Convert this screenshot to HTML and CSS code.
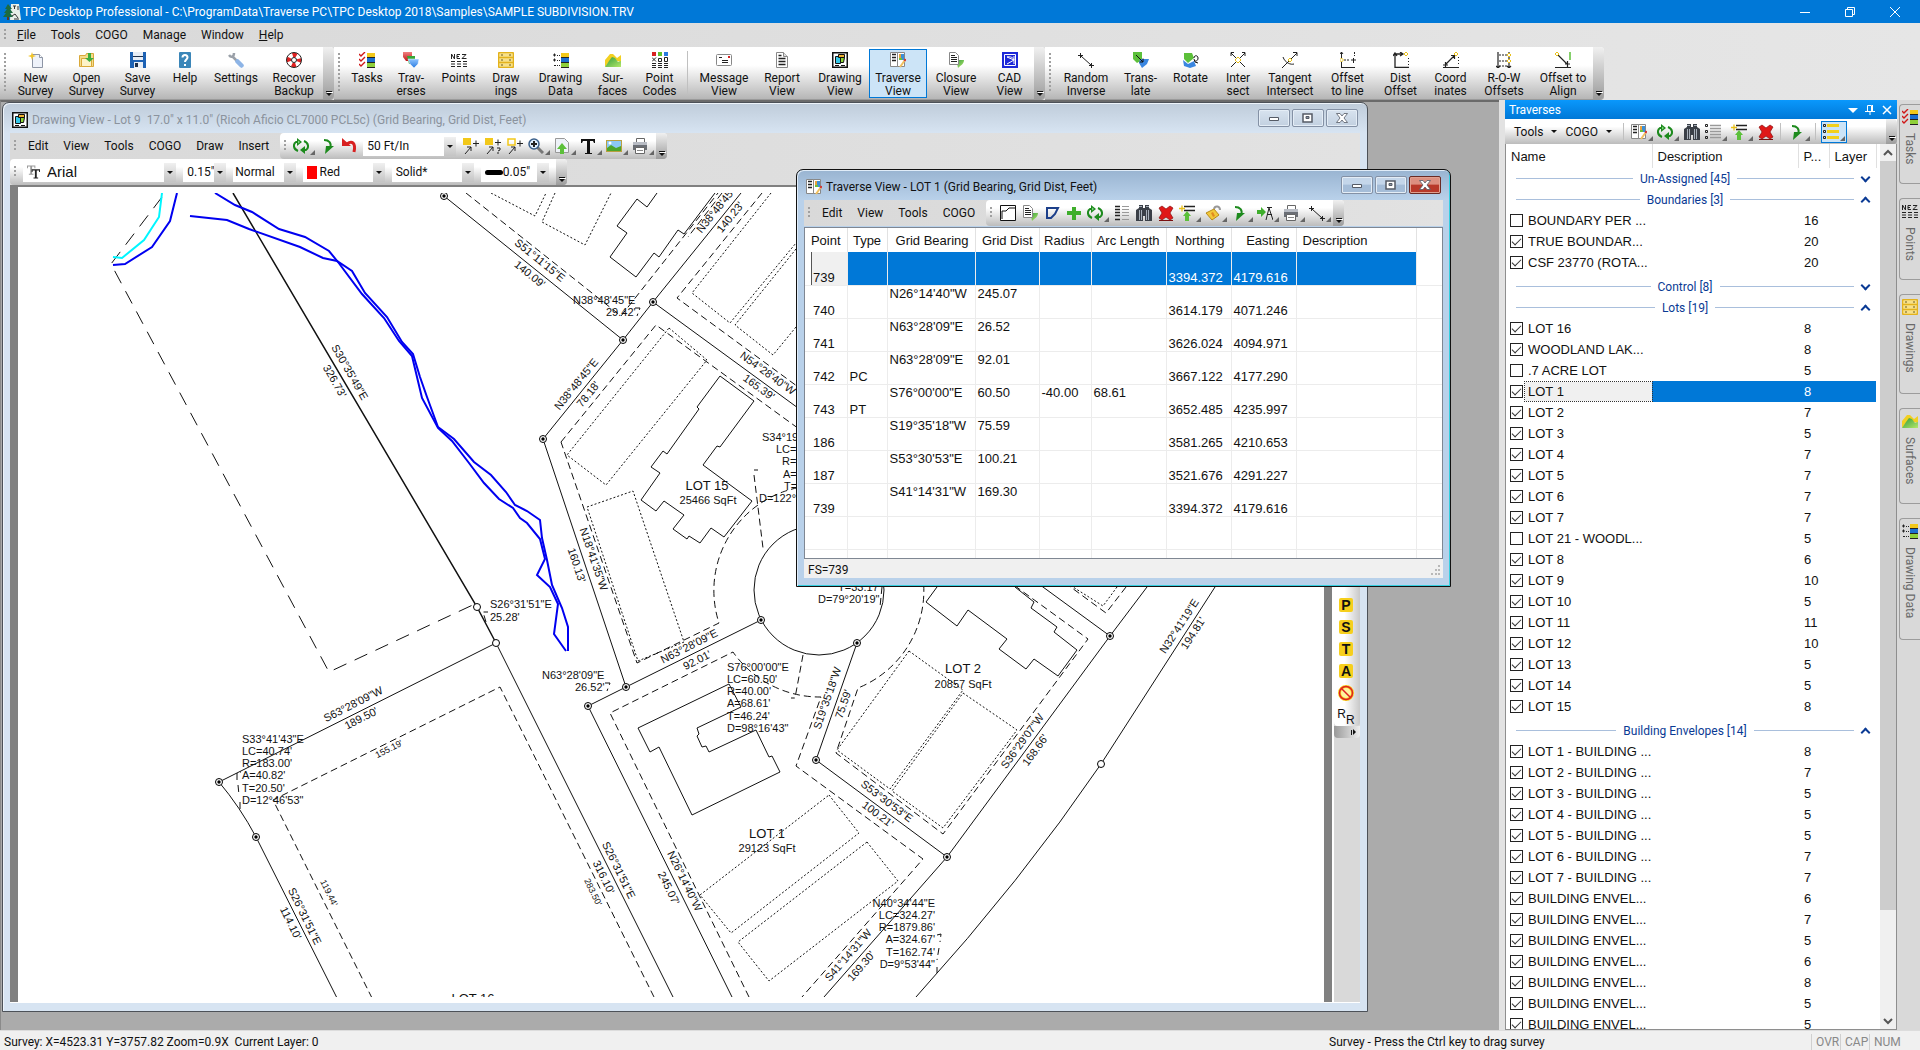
FILE: index.html
```html
<!DOCTYPE html>
<html lang="en">
<head>
<meta charset="utf-8">
<title>TPC Desktop Professional</title>
<link rel="stylesheet" href="styles.css">
</head>
<body>
<svg class="defs" aria-hidden="true">
  <defs>
    <linearGradient id="gGreen" x1="0" y1="0" x2="1" y2="1"><stop offset="0" stop-color="#2f9a3c"/><stop offset="1" stop-color="#b4e86a"/></linearGradient>
    <linearGradient id="gBlue" x1="0" y1="0" x2="0" y2="1"><stop offset="0" stop-color="#8fc4ff"/><stop offset="1" stop-color="#2a7be0"/></linearGradient>
    <linearGradient id="gRed" x1="0" y1="0" x2="0" y2="1"><stop offset="0" stop-color="#f08080"/><stop offset="1" stop-color="#c01818"/></linearGradient>
    <symbol id="i-app" viewBox="0 0 18 18"><path fill="#e8f0e8" d="M8 1h8l2 16H7z"/><path fill="#1c6b3f" d="M5 1l4 5H7l3 4H7l3 4H0l3-4H1l3-4H2z"/><path fill="#5c3b20" d="M4 14h2v3H4z"/><path stroke="#333" fill="none" d="M10 3h3M11.500 3v3M15 3v4M9 13l3-2 3 4M11 16h5"/></symbol>
    <symbol id="i-new" viewBox="0 0 16 16"><path fill="#eef2fa" stroke="#8d95a5" d="M4.500 2.500h7l3 3v10h-10z"/><path fill="#fff" stroke="#8d95a5" d="M11.500 2.500v3h3"/><path fill="#f2c52a" d="M4 0l1 3 3 1-3 1-1 3-1-3-3-1 3-1z"/></symbol>
    <symbol id="i-open" viewBox="0 0 16 16"><path fill="#f4dc8c" stroke="#d9a93a" d="M.500 3.500h6l1-2h7v13h-14z"/><path fill="#fdf3c8" stroke="#d9a93a" d="M2.500 6.500h10v8h-10z"/><path fill="#3fae3f" d="M9 1h3v5h3l-4.500 4L6 6h3z"/></symbol>
    <symbol id="i-save" viewBox="0 0 16 16"><path fill="#1d62b4" d="M0 0h16v16H0z"/><path fill="#e8eef6" d="M3 0h10v8H3zM4 10h9v6H4z"/><path fill="#1d2f4a" d="M3 4h10v1H3zM5 11h3v4H5z"/></symbol>
    <symbol id="i-help" viewBox="0 0 16 16"><rect x="2" y="0" width="12" height="16" rx="1" fill="#3b86b8"/><path fill="none" stroke="#fff" stroke-width="2" d="M5.500 5.500c0-3.500 5-3.500 5 0 0 2-2.500 2-2.500 4.500M8 12v2"/></symbol>
    <symbol id="i-settings" viewBox="0 0 16 16"><path fill="none" stroke="#9aa0a8" stroke-width="2.500" d="M1 3c2 3 5 2 5-2M4.500 4.500L9 9"/><path stroke="#8db4e6" stroke-width="4.500" stroke-linecap="round" d="M9.500 9.500l4 4"/></symbol>
    <symbol id="i-recover" viewBox="0 0 16 16"><circle cx="8" cy="8" r="5" fill="none" stroke="#fff" stroke-width="4.500"/><circle cx="8" cy="8" r="5" fill="none" stroke="#e02020" stroke-width="4.500" stroke-dasharray="4 3.850" stroke-dashoffset="2"/><circle cx="8" cy="8" r="7.500" fill="none" stroke="#222"/><circle cx="8" cy="8" r="2.500" fill="#fff" stroke="#222"/></symbol>
    <symbol id="i-tasks" viewBox="0 0 16 16"><path fill="none" stroke="#d01818" stroke-width="1.400" d="M0 2l2 2 4-4M0 7l2 2 4-4M0 12l2 2 4-4"/><path fill="#f2c81a" d="M8 1h8v4H8z"/><path fill="#1b6fd0" d="M8 6h8v4H8z"/><path fill="#8fd03a" d="M8 11h8v4H8z"/><path stroke="#222" d="M8 5.500h8M8 10.500h8M8 15.500h8"/></symbol>
    <symbol id="i-trav" viewBox="0 0 16 16"><path fill="url(#gRed)" d="M0 0h9v9H3L0 5z"/><path fill="#37a637" d="M4 4h8v8H6z"/><path fill="url(#gBlue)" stroke="#fff" stroke-width=".500" d="M5 7h11l-1 5-4 4-4-4z"/></symbol>
    <symbol id="i-points" viewBox="0 0 16 16"><path fill="none" stroke="#222" d="M.500 7V2l3 5V2M9 2.500H6v4h3M6 4.500h2M11 2.500h4l-4 4h4.500M0 9.500h4M6 9.500h4M12 9.500h4M0 12h4M6 12h4M12 12h4M0 14.500h4M6 14.500h4M12 14.500h4"/></symbol>
    <symbol id="i-draws" viewBox="0 0 16 16"><rect x=".500" y=".500" width="15" height="15" rx="1.500" fill="#f7e08a" stroke="#e3b21c" stroke-width="1.500"/><path stroke="#e3b21c" stroke-width="1.500" d="M1 5.500h14M1 10.500h14"/><path stroke="#6b5c20" d="M3 3h2M11 3h2M3 8h2M11 8h2M3 13h2M11 13h2"/></symbol>
    <symbol id="i-data" viewBox="0 0 16 16"><path stroke="#222" d="M0 3h3M1.500 1.500v3M4 3.500h1M6 3.500h1M0 8h3M1.500 6.500v3M4 8.500h1M6 8.500h1M1 13.500h2M4 13.500h1M6 13.500h1M8 5.500h8M8 10.500h8M8 15.500h8"/><path fill="#f2c81a" d="M8 1h8v4H8z"/><path fill="#1b6fd0" d="M8 6h8v4H8z"/><path fill="#8fd03a" d="M8 11h8v4H8z"/></symbol>
    <symbol id="i-surf" viewBox="0 0 16 16"><path fill="#f2d021" d="M0 8l5-6h3l4 4 4-3v7l-4-1-4-3-4 4-4 5z"/><path fill="url(#gGreen)" d="M0 15l4-6 3-4 3 1 3 4 3-1v6z"/></symbol>
    <symbol id="i-codes" viewBox="0 0 16 16"><path fill="#d82020" d="M0 0h4v4H0z"/><path fill="#5fc12c" d="M6 0h4v4H6z"/><path fill="#2a7be0" d="M12 0h4v4h-4z"/><path fill="none" stroke="#222" d="M0 5.500l4 4M4 5.500l-4 4M6.500 6.500h3v3h-3zM12.500 5.500h3v4h-3zM0 11.500h4M6 11.500h4M12 11.500h4M0 13.500h4M6 13.500h4M12 13.500h4M0 15.500h4M6 15.500h4M12 15.500h4"/></symbol>
    <symbol id="i-msg" viewBox="0 0 16 16"><rect x=".500" y="2.500" width="15" height="11" rx="1" fill="#fff" stroke="#888"/><path stroke="#222" d="M3 5.500h3M6 8.500h6M6 10.500h6"/><path fill="#d82020" d="M12 4h2v2h-2z"/></symbol>
    <symbol id="i-report" viewBox="0 0 16 16"><path fill="#fff" stroke="#888" d="M2.500.500h7l4 4v11h-11z"/><path fill="#ddd" stroke="#888" d="M9.500.500v4h4"/><path stroke="#222" stroke-width="1.300" d="M4.500 3.500h3M4.500 6.500h7M4.500 9.500h7M4.500 12.500h7"/></symbol>
    <symbol id="i-drawv" viewBox="0 0 16 16"><rect x=".750" y=".750" width="14.500" height="14.500" fill="#fff" stroke="#111" stroke-width="1.500"/><path fill="#35c8e8" stroke="#111" d="M3.500 4.500h5v7h-5z"/><path fill="#f0b030" stroke="#111" d="M6.500 2.500h6v3h-6z"/><path fill="#8cd636" stroke="#111" d="M8.500 5.500h4l-1 5h-3z"/><path stroke="#111" d="M3 13.500h4M9 13.500h4"/></symbol>
    <symbol id="i-travv" viewBox="0 0 16 16"><path fill="#fff" stroke="#888" d="M.500.500h7v14h-7zM7.500.500h7v14h-7z"/><path stroke="#222" stroke-width="1.500" d="M2 2.500h4M2 5.500h4M2 8.500h4"/><path fill="#e9a23a" d="M9 2h3v4H9z"/><path fill="#3a8fd8" d="M11 2h3v6h-3z"/><path fill="#6cc03a" d="M9 6h3v2H9z"/><path stroke="#f0c060" stroke-width="2" d="M15 8l-5 7"/><path stroke="#d03030" stroke-width="2" d="M15.500 7l-1 2"/></symbol>
    <symbol id="i-close" viewBox="0 0 16 16"><path fill="url(#gGreen)" d="M6 8h10c0 4-3 5-6 8l-1-5z"/><path fill="#fff" stroke="#888" d="M1.500.500h6l3 3v9h-9z"/><path stroke="#222" d="M3 3.500h4M3 5.500h6M3 7.500h6M3 9.500h6"/></symbol>
    <symbol id="i-cad" viewBox="0 0 16 16"><path fill="#1c28d8" d="M0 0h16v16H0z"/><path fill="none" stroke="#fff" d="M2.500 2.500h11v11h-11zM5 5c3-1 7 1 7 3l-7 4M5 5l7 3M12 4v8"/></symbol>
    <symbol id="i-inv" viewBox="0 0 16 16"><path stroke="#222" fill="none" d="M0 3.500h5M2.500 1v5M3 4l10 9M11 13.500h5M13.500 11v5"/></symbol>
    <symbol id="i-transl" viewBox="0 0 16 16"><path fill="#5cc03a" d="M0 0h9v8l-5 3L0 7z"/><path fill="#3a86e0" d="M7 7h9l-2 5-5 4-3-5z"/><path fill="none" stroke="#111" d="M3 3l7 7M10 6.500v3.500h-3.500"/></symbol>
    <symbol id="i-rot" viewBox="0 0 16 16"><path fill="#5cc03a" d="M1 1h8l2 5-6 5-4-4z"/><path fill="#3a86e0" d="M0 8l5 4 6-3 2 5-6 2-6-2z"/><path fill="none" stroke="#111" d="M11 6c0-3 4-3 4 0s-2 3-3 3M11 7l1 3 3 1"/></symbol>
    <symbol id="i-inter" viewBox="0 0 16 16"><path fill="none" stroke="#222" d="M1 1l14 14M15 1L1 15M1 4V.500h3M12 .500h3V4"/><path fill="#fff" stroke="#e8c01a" d="M8 5l3 3-3 3-3-3z"/></symbol>
    <symbol id="i-tang" viewBox="0 0 16 16"><path fill="none" stroke="#222" d="M0 16L15 1M11 .500h4V4M1 5c2 6 8 8 11 7"/><path fill="#fff" stroke="#e8c01a" d="M8 6l2 2-2 2-2-2z"/></symbol>
    <symbol id="i-offl" viewBox="0 0 16 16"><path fill="none" stroke="#222" d="M1.500 16V0M0 2l1.500-2L3 2M1 15.500h14M11 8h5M13.500 6v5"/><path stroke="#222" stroke-dasharray="2 1" d="M4 8h6M14.500 0v4"/><path fill="#fff" stroke="#e8c01a" d="M1.500 6l2 2-2 2-2-2z"/></symbol>
    <symbol id="i-dist" viewBox="0 0 16 16"><path fill="none" stroke="#222" stroke-width="1.300" d="M2 16V2h7M7 0l3 2-3 2M2 15.500h14M0 4l2-3 2 3"/><path fill="#fff" stroke="#e8c01a" d="M13 0l2 2-2 2-2-2z"/><path stroke="#222" stroke-dasharray="1 2" d="M15.500 6v9"/></symbol>
    <symbol id="i-coord" viewBox="0 0 16 16"><path fill="none" stroke="#222" stroke-width="1.200" d="M0 15.500h16M0 13h5M2.500 10v5M3 12l8-8M8 3.500h3.500V7"/><path fill="#fff" stroke="#e8c01a" d="M13 0l2 2-2 2-2-2z"/><path stroke="#222" stroke-dasharray="1 2" d="M15.500 5v9"/></symbol>
    <symbol id="i-row" viewBox="0 0 16 16"><path fill="none" stroke="#222" stroke-width="1.200" d="M2 0v16M0 14l2 2 2-2M13 0v16M11 14l2 2 2-2"/><path stroke="#222" stroke-dasharray="2 1" d="M3 3h8M3 9h8M3 14h8"/><path fill="#fff" stroke="#e8c01a" d="M13 1l2 2-2 2-2-2zM13 7l2 2-2 2-2-2z"/></symbol>
    <symbol id="i-align" viewBox="0 0 16 16"><path fill="none" stroke="#222" stroke-width="1.200" d="M0 15.500h16M10 12h5M12.500 9v6M3 3l9 9"/><path fill="#fff" stroke="#e8c01a" d="M2 0l2 2-2 2-2-2z"/><path stroke="#5cc03a" stroke-width="1.500" d="M15 0v8"/></symbol>
    <symbol id="i-refresh" viewBox="0 0 16 16"><path fill="none" stroke="#1d8a1d" stroke-width="2" d="M5 13C0 11 0 6 3 4h2M11 3c5 2 5 7 2 9h-2"/><path fill="#1d8a1d" d="M4 0l5 4-5 4zM12 8v8l-5-4z"/><path fill="#7fd87f" d="M5 2.500l2 1.500-2 1.500z"/></symbol>
    <symbol id="i-redo" viewBox="0 0 16 16"><path fill="none" stroke="#1d8a1d" stroke-width="2" d="M4 2c5 0 8 3 6 8"/><path fill="#1d8a1d" d="M14 8l-9 8 1-8z"/></symbol>
    <symbol id="i-undo" viewBox="0 0 16 16"><path fill="none" stroke="#d82020" stroke-width="3" d="M5 6c5-4 9-1 7 8"/><path fill="#d82020" d="M0 8V0l9 8z"/></symbol>
    <symbol id="i-pa" viewBox="0 0 16 16"><path fill="#f2c81a" d="M0 0h8v7H0z"/><path fill="none" stroke="#222" d="M10 5.500h6M13 2.500v6M2 16l6-7M4 9h4v4"/></symbol>
    <symbol id="i-pq" viewBox="0 0 16 16"><path fill="#f2c81a" d="M0 0h8v7H0z"/><path fill="none" stroke="#222" d="M10 4.500h6M13 1.500v6M2 16l6-7M4 9h4v4M12 10h3v2l-2 1M13 14v2"/></symbol>
    <symbol id="i-pb" viewBox="0 0 16 16"><path fill="none" stroke="#f2c81a" stroke-width="1.500" d="M1 1h7v6H1z"/><path fill="none" stroke="#222" d="M10 5.500h6M13 2.500v6M2 16l6-7M4 9h4v4"/></symbol>
    <symbol id="i-zoom" viewBox="0 0 16 16"><path stroke="#777" stroke-width="3" d="M9 9l6 6"/><circle cx="6" cy="6" r="5" fill="#dfefff" stroke="#3a5f8a" stroke-width="1.500"/><path stroke="#222" stroke-width="2" d="M3 6h6M6 3v6"/></symbol>
    <symbol id="i-sheet" viewBox="0 0 16 16"><path fill="#eef2f8" stroke="#999" d="M1.500.500h9l4 4v10h-13z"/><path fill="#5cc03a" d="M8 5l5 6h-3v5H6v-5H3z"/></symbol>
    <symbol id="i-text" viewBox="0 0 16 16"><path fill="#111" d="M1 1h14v4h-1l-1-2h-3v12h2v1H5v-1h2V3H3L2 5H1z"/></symbol>
    <symbol id="i-pic" viewBox="0 0 16 16"><rect x=".500" y="2.500" width="15" height="11" fill="#8cc8f4" stroke="#b8a040"/><path fill="#4ca62c" d="M1 10l4-3 5 3 5-2v5H1z"/><circle cx="4" cy="5" r="1.500" fill="#fff"/></symbol>
    <symbol id="i-print" viewBox="0 0 16 16"><path fill="#fff" stroke="#666" d="M4.500.500h8v4h-8z"/><path fill="#6a6e75" d="M1 4h14v8H1z"/><path fill="#b8bcc4" d="M1 4h14v3H1z"/><path fill="#fff" stroke="#666" d="M3.500 9.500h9v6h-9z"/><path stroke="#888" d="M5 12.500h6"/></symbol>
    <symbol id="i-tt" viewBox="0 0 14 14"><path fill="#999" d="M0 0h9v3H8V1H5.500v8H7v1H2V9h1.500V1H1v2H0z"/><path fill="#222" d="M5 4h9v3h-1V5.500h-2.500V13H12v1H7v-1h1.500V5.500H6V7H5z"/></symbol>
    <symbol id="i-box" viewBox="0 0 16 16"><path fill="#fff" stroke="#111" d="M.500.500h15v15H.500z"/><path fill="none" stroke="#111" d="M2 14V6h4l3-3h6"/></symbol>
    <symbol id="i-poly" viewBox="0 0 16 16"><path fill="none" stroke="#1c3f8a" stroke-width="2" d="M3 3h11l-3 6-4 4H3z"/></symbol>
    <symbol id="i-plus" viewBox="0 0 16 16"><path fill="#3fae2c" d="M6 2h4v4h5v4h-5v5H6v-5H1V6h5z"/></symbol>
    <symbol id="i-rows" viewBox="0 0 16 16"><path stroke="#222" stroke-width="1.500" d="M1 1.500h5M1 4.500h5M1 7.500h5M1 10.500h5M1 14.500h5"/><path stroke="#999" d="M8 1.500h7M8 4.500h7M8 7.500h7M8 10.500h7M8 14.500h7"/></symbol>
    <symbol id="i-bino" viewBox="0 0 16 16"><path fill="#3a3f47" d="M3 0h4v3h2V0h4v3l3 2v11H9v-5H7v5H0V5l3-2z"/><path stroke="#a8b0ba" d="M3.500 5v10M12.500 5v10M5.500 5v10M10.500 5v10M3 1.500h3M10 1.500h3"/></symbol>
    <symbol id="i-del" viewBox="0 0 16 16"><path fill="#e01818" stroke="#8a1010" stroke-width=".700" d="M1 3l3-2 4 3 4-3 3 2-3 5 3 5-3 2-4-3-4 3-3-2 3-5z"/><path stroke="#7a1010" d="M1 15.500h14"/></symbol>
    <symbol id="i-ins" viewBox="0 0 16 16"><path stroke="#222" stroke-width="1.300" d="M5 1.500h11M5 5.500h11"/><path stroke="#e8c01a" stroke-width="1.300" d="M0 3.500h6M3 .500v6"/><path fill="#5cc03a" d="M8 6l4 5h-2v5H6v-5H4z"/></symbol>
    <symbol id="i-lock" viewBox="0 0 16 16"><path fill="none" stroke="#999" stroke-width="2" d="M9 4c1-4 6-3 6 1"/><path fill="#f2c83a" stroke="#b88a18" d="M1 8l8-4 5 6-7 5z"/><path fill="#e08a20" d="M6 8l2 4 2-1-2-4z"/></symbol>
    <symbol id="i-go" viewBox="0 0 16 16"><path fill="#3fae2c" d="M0 5h4V2l5 5-5 5V9H0z"/><path fill="none" stroke="#222" d="M9 15l3-12 4 12M10 2.500h5M10 9.500h5"/></symbol>
    <symbol id="i-list" viewBox="0 0 16 16"><path fill="none" stroke="#222" d="M.500.500h2v2h-2zM.500 6.500h2v2h-2zM.500 12.500h2v2h-2z"/><path stroke="#999" stroke-width="1.500" d="M5 1.500h11M5 4.500h11M5 7.500h11M5 10.500h11M5 13.500h11"/></symbol>
    <symbol id="i-ylist" viewBox="0 0 16 16"><path fill="none" stroke="#222" d="M.500.500h2v2h-2zM.500 6.500h2v2h-2zM.500 12.500h2v2h-2z"/><path stroke="#f2d01a" stroke-width="3" d="M4 1.500h12M4 7.500h12M4 13.500h12"/></symbol>
    <symbol id="i-min" viewBox="0 0 14 10"><path fill="#fff" stroke="#555b66" d="M2.500 4.500h9v3h-9z"/></symbol>
    <symbol id="i-max" viewBox="0 0 14 10"><path fill="#fff" stroke="#555b66" stroke-width="1.500" d="M2 1h9v8H2z"/><path fill="#8a93a2" stroke="#555b66" d="M5 3.500h3v2H5z"/></symbol>
    <symbol id="i-x" viewBox="0 0 14 10"><path fill="#fff" stroke="#555b66" stroke-width=".800" d="M1.500.500h3.500l2 2.500 2-2.500h3.500L9 5l3.500 4.500H9L7 7 5 9.500H1.500L5 5z"/></symbol>
    <symbol id="n-mon" viewBox="-5 -5 10 10" overflow="visible"><circle r="3.500" fill="#fff" stroke="#000"/><circle r="1.700" fill="#000"/></symbol>
    <symbol id="n-open" viewBox="-5 -5 10 10" overflow="visible"><circle r="3.500" fill="#fff" stroke="#000"/></symbol>
  </defs>
</svg>
<div class="app">
  <header class="titlebar">
    <svg class="logo"><use href="#i-app"/></svg>
    <h1>TPC Desktop Professional - C:\ProgramData\Traverse PC\TPC Desktop 2018\Samples\SAMPLE SUBDIVISION.TRV</h1>
    <div class="sys">
      <button aria-label="Minimize"><svg viewBox="0 0 12 12"><path d="M1 6.500h10"/></svg></button>
      <button aria-label="Restore"><svg viewBox="0 0 12 12"><path d="M1.500 3.500h7v7h-7zM3.500 3.500v-2h7v7h-2"/></svg></button>
      <button aria-label="Close"><svg viewBox="0 0 12 12"><path d="M1 1l10 10M11 1L1 11"/></svg></button>
    </div>
  </header>
  <nav class="menubar"><i class="grip"></i>
    <button><u>F</u>ile</button><button>Tools</button><button>COGO</button><button>Manage</button><button>Window</button><button><u>H</u>elp</button>
  </nav>
  <div class="ribbon">
    <div class="rgroup"><i class="grip"></i>
      <button class="w51"><svg><use href="#i-new"/></svg>New<br>Survey</button>
      <button class="w51"><svg><use href="#i-open"/></svg>Open<br>Survey</button>
      <button class="w51"><svg><use href="#i-save"/></svg>Save<br>Survey</button>
      <button class="w44"><svg><use href="#i-help"/></svg>Help</button>
      <button class="w58"><svg><use href="#i-settings"/></svg>Settings</button>
      <button class="w58"><svg><use href="#i-recover"/></svg>Recover<br>Backup</button>
      <i class="more"></i></div>
    <div class="rgroup"><i class="grip"></i>
      <button class="w44"><svg><use href="#i-tasks"/></svg>Tasks</button>
      <button class="w44"><svg><use href="#i-trav"/></svg>Trav-<br>erses</button>
      <button class="w51"><svg><use href="#i-points"/></svg>Points</button>
      <button class="w44"><svg><use href="#i-draws"/></svg>Draw<br>ings</button>
      <button class="w65"><svg><use href="#i-data"/></svg>Drawing<br>Data</button>
      <button class="w39"><svg><use href="#i-surf"/></svg>Sur-<br>faces</button>
      <button class="w55"><svg><use href="#i-codes"/></svg>Point<br>Codes</button>
      <i class="sep"></i>
      <button class="w58"><svg><use href="#i-msg"/></svg>Message<br>View</button>
      <button class="w58"><svg><use href="#i-report"/></svg>Report<br>View</button>
      <button class="w58"><svg><use href="#i-drawv"/></svg>Drawing<br>View</button>
      <button class="w58 on"><svg><use href="#i-travv"/></svg>Traverse<br>View</button>
      <button class="w58"><svg><use href="#i-close"/></svg>Closure<br>View</button>
      <button class="w49"><svg><use href="#i-cad"/></svg>CAD<br>View</button>
      <i class="more"></i></div>
    <div class="rgroup"><i class="grip"></i>
      <button class="w60"><svg><use href="#i-inv"/></svg>Random<br>Inverse</button>
      <button class="w49"><svg><use href="#i-transl"/></svg>Trans-<br>late</button>
      <button class="w51"><svg><use href="#i-rot"/></svg>Rotate</button>
      <button class="w44"><svg><use href="#i-inter"/></svg>Inter<br>sect</button>
      <button class="w60"><svg><use href="#i-tang"/></svg>Tangent<br>Intersect</button>
      <button class="w55"><svg><use href="#i-offl"/></svg>Offset<br>to line</button>
      <button class="w51"><svg><use href="#i-dist"/></svg>Dist<br>Offset</button>
      <button class="w49"><svg><use href="#i-coord"/></svg>Coord<br>inates</button>
      <button class="w58"><svg><use href="#i-row"/></svg>R-O-W<br>Offsets</button>
      <button class="w60"><svg><use href="#i-align"/></svg>Offset to<br>Align</button>
      <i class="more"></i></div>
  </div>

  <main class="work">
    <section class="mdi">
      <article class="win drawing">
        <header class="wtitle"><svg><use href="#i-drawv"/></svg><h2>Drawing View - Lot 9&nbsp; 17.0" x 11.0" (Ricoh Aficio CL7000 PCL5c) (Grid Bearing, Grid Dist, Feet)</h2>
          <button aria-label="Minimize"><svg><use href="#i-min"/></svg></button><button aria-label="Maximize"><svg><use href="#i-max"/></svg></button><button aria-label="Close"><svg><use href="#i-x"/></svg></button></header>
        <div class="bars">
          <nav class="wmenu"><i class="grip"></i><button>Edit</button><button>View</button><button>Tools</button><button>COGO</button><button>Draw</button><button>Insert</button></nav>
          <div class="strip"><i class="grip"></i>
            <button class="ib d" aria-label="Refresh"><svg><use href="#i-refresh"/></svg></button>
            <button class="ib" aria-label="Redraw"><svg><use href="#i-redo"/></svg></button>
            <button class="ib" aria-label="Undo"><svg><use href="#i-undo"/></svg></button>
            <label class="combo scale"><select aria-label="Scale"><option>50 Ft/In</option></select><i class="arr"></i></label>
            <button class="ib" aria-label="Add label"><svg><use href="#i-pa"/></svg></button>
            <button class="ib" aria-label="Query label"><svg><use href="#i-pq"/></svg></button>
            <button class="ib" aria-label="Add box"><svg><use href="#i-pb"/></svg></button>
            <button class="ib d" aria-label="Zoom"><svg><use href="#i-zoom"/></svg></button>
            <button class="ib d" aria-label="Sheet"><svg><use href="#i-sheet"/></svg></button>
            <button class="ib d" aria-label="Text"><svg><use href="#i-text"/></svg></button>
            <button class="ib d" aria-label="Picture"><svg><use href="#i-pic"/></svg></button>
            <button class="ib d" aria-label="Print"><svg><use href="#i-print"/></svg></button>
            <i class="more"></i></div>
        </div>
        <div class="bars">
          <div class="strip format"><i class="grip"></i>
            <label class="combo font"><svg><use href="#i-tt"/></svg><select aria-label="Font"><option>Arial</option></select><i class="arr"></i></label>
            <label class="combo size"><select aria-label="Text height"><option>0.15"</option></select><i class="arr"></i></label>
            <label class="combo weight"><select aria-label="Style"><option>Normal</option></select><i class="arr"></i></label>
            <label class="combo pen"><i class="swatch"></i><select aria-label="Color"><option>Red</option></select><i class="arr"></i></label>
            <label class="combo pen"><select aria-label="Line type"><option>Solid*</option></select><i class="arr"></i></label>
            <label class="combo thick"><i class="stroke"></i><select aria-label="Line width"><option>0.05"</option></select><i class="arr"></i></label>
            <i class="more"></i></div>
        </div>
        <div class="sheet">
          <div class="canvas">
            <svg class="map" width="1306" height="815" viewBox="18 187 1306 815">
              <clipPath id="page"><rect x="18" y="193" width="1306" height="804"/></clipPath>
              <g clip-path="url(#page)">
                <g class="ln">
                  <path d="M233 193L477 607L496 643" stroke-width="1.500"/>
                  <path d="M673 997L496 643L219 782Q240 807 256 837L337 998"/>
                  <path d="M732 997L588 706L626 687L761 620M626 687L543 439L623 340L653 302L741 193M444 196L623 340M653 302L1110 636L947 857L824 997M1147 587L1110 636M857 643L816 760L947 857"/>
                  <circle cx="819" cy="590" r="65"/>
                  <path d="M1215 587L1101 764Q1022 880 916 997"/>
                  <path d="M657 193L647 207L637 199L617 226L627 233L610 257L636 277L654 253L659 257L678 230L684 234L715 193"/>
                  <path d="M720 376L754 401L720 447L717 446L703 465L752 501L724 537L711 528L700 543L689 536L687 539L673 529L684 515L664 501L656 511L641 500L660 473L651 467L663 451L667 454L699 409L697 407z"/>
                  <path d="M729 684L638 728L650 752L659 747L692 815L780 772L772 756L769 757L756 730L709 752L706 746L702 747L697 736L699 734L697 728L741 707z"/>
                  <path d="M937 587L926 602L957 626L968 610L1007 639L999 649L1026 669L1034 659L1058 676L1077 650L1054 632L1057 627L1031 608L1034 602L1015 587"/>
                </g>
                <g class="ln long"><path d="M162 197L111 264L329 672L477 603"/></g>
                <g class="ln dash">
                  <path d="M372 998L273 800L500 687L654 997"/>
                  <path d="M466 193L621 316L718 193M762 193L677 298L1106 613L1126 587M722 193L688 237"/>
                  <path d="M561 442L656 325L1088 639L943 834L836 753L858 688A105 105 0 1 0 719 623L637 663z"/>
                  <path d="M749 997L610 713L733 652A106 106 0 0 0 821 697L796 766L923 859L802 997"/>
                  <path d="M803 655L795 698H791M754 475L763 548M754 470h4M486 622L483 612H488M237 780V772H241M238 785L239 795M240 802V809M937 935L941 934L940 942M939 948L937 960M937 967V973M882 587L880 607"/>
                  <path d="M605 683H610L607 691M635 308H640L637 316"/>
                </g>
                <g class="ln dot">
                  <path d="M491 193L535 216L546 193M555 193L542 222L585 245L611 193"/>
                  <path d="M771 193L692 293L730 323L796 243M796 249L735 325L773 355L796 327"/>
                  <path d="M669 328L707 360L606 485L567 455zM587 507L633 491L684 642L638 661z"/>
                  <path d="M829 795L859 833L731 933L700 895zM867 842L898 881L769 981L738 942z"/>
                  <path d="M909 651L963 690L890 789L837 750zM963 693L1017 730L943 828L892 791zM1117 587L1103 606L1073 587"/>
                </g>
                <g class="river">
                  <path class="cyan" d="M162 193L159 217L144 240L122 258L113 257"/>
                  <path d="M177 193L170 221L152 247L125 264L113 265"/>
                  <path d="M190 216L227 220L249 229L300 247L323 258L337 261L352 271L365 293L387 317L402 342L413 354L420 377L427 397L438 427L454 439L474 462L491 475L506 492L515 505L527 511L540 520L542 538L547 560L549 570L552 585L562 608L568 627V651"/>
                  <path d="M215 193L235 205L252 212L279 229L305 237L329 251L338 262L362 294L384 318L399 341L412 356L417 377L422 398L438 428L452 441L469 463L484 483L499 499L513 508L520 518L527 523L540 539L545 559L537 575L550 587L558 604L554 634L566 651"/>
                </g>
                <g class="nodes">
                  <use href="#n-mon" x="439" y="191" width="10" height="10"/><use href="#n-mon" x="648" y="297" width="10" height="10"/><use href="#n-mon" x="618" y="335" width="10" height="10"/><use href="#n-mon" x="538" y="434" width="10" height="10"/><use href="#n-mon" x="583" y="701" width="10" height="10"/><use href="#n-mon" x="621" y="682" width="10" height="10"/><use href="#n-mon" x="756" y="615" width="10" height="10"/><use href="#n-mon" x="852" y="638" width="10" height="10"/><use href="#n-mon" x="811" y="755" width="10" height="10"/><use href="#n-mon" x="942" y="852" width="10" height="10"/><use href="#n-mon" x="1105" y="631" width="10" height="10"/><use href="#n-mon" x="214" y="777" width="10" height="10"/><use href="#n-mon" x="251" y="832" width="10" height="10"/>
                  <use href="#n-open" x="472" y="602" width="10" height="10"/><use href="#n-open" x="491" y="638" width="10" height="10"/><use href="#n-open" x="1096" y="759" width="10" height="10"/>
                </g>
                <g class="t">
                  <text x="573" y="304">N38°48'45"E</text><text x="606" y="316">29.42'</text>
                  <text x="490" y="608">S26°31'51"E</text><text x="490" y="621">25.28'</text>
                  <text x="542" y="679">N63°28'09"E</text><text x="575" y="691">26.52'</text>
                  <text x="242" y="743">S33°41'43"E</text><text x="242" y="755">LC=40.74'</text><text x="242" y="767">R=183.00'</text><text x="242" y="779">A=40.82'</text><text x="242" y="792">T=20.50'</text><text x="242" y="804">D=12°46'53"</text>
                  <text x="727" y="671">S76°00'00"E</text><text x="727" y="683">LC=60.50'</text><text x="727" y="695">R=40.00'</text><text x="727" y="707">A=68.61'</text><text x="727" y="720">T=46.24'</text><text x="727" y="732">D=98°16'43"</text>
                  <text x="762" y="441">S34°19</text><text x="776" y="453">LC=</text><text x="782" y="465">R=</text><text x="783" y="478">A=</text><text x="784" y="490">T=</text><text x="759" y="502">D=122°</text>
                  <text x="818" y="603">D=79°20'19"</text><text x="838" y="591">T=33.17</text>
                </g>
                <g class="t end">
                  <text x="935" y="907">N40°34'44"E</text><text x="935" y="919">LC=324.27'</text><text x="935" y="931">R=1879.86'</text><text x="935" y="943">A=324.67'</text><text x="935" y="956">T=162.74'</text><text x="935" y="968">D=9°53'44"</text>
                </g>
                <g class="t mid">
                  <text dy="4" transform="translate(540 260) rotate(39)">S51°11'15"E</text><text dy="4" transform="translate(530 274) rotate(39)">140.09'</text>
                  <text dy="4" transform="translate(576 384) rotate(-51)">N38°48'45"E</text><text dy="4" transform="translate(588 394) rotate(-51)">78.18'</text>
                  <text dy="4" transform="translate(718 207) rotate(-51)">N38°48'45"E</text><text dy="4" transform="translate(730 217) rotate(-51)">140.23'</text>
                  <text dy="4" transform="translate(768 373) rotate(36)">N54°28'40"W</text><text dy="4" transform="translate(759 387) rotate(36)">165.39'</text>
                  <text dy="4" transform="translate(594 559) rotate(71)">N18°41'35"W</text><text dy="4" transform="translate(577 565) rotate(71)">160.13'</text>
                  <text dy="4" transform="translate(350 372) rotate(60)">S30°35'49"E</text><text dy="4" transform="translate(335 381) rotate(60)">326.73'</text>
                  <text dy="4" transform="translate(353 704) rotate(-27)">S63°28'09"W</text><text dy="4" transform="translate(361 718) rotate(-27)">189.50'</text>
                  <text dy="4" transform="translate(305 916) rotate(64)">S26°31'51"E</text><text dy="4" transform="translate(291 923) rotate(64)">114.10'</text>
                  <text dy="4" transform="translate(619 870) rotate(64)">S26°31'51"E</text><text dy="4" transform="translate(604 877) rotate(64)">316.10'</text>
                  <text dy="4" transform="translate(685 881) rotate(64)">N26°14'40"W</text><text dy="4" transform="translate(669 888) rotate(64)">245.07'</text>
                  <text dy="4" transform="translate(689 646) rotate(-27)">N63°28'09"E</text><text dy="4" transform="translate(697 660) rotate(-27)">92.01'</text>
                  <text dy="4" transform="translate(827 698) rotate(-71)">S19°35'18"W</text><text dy="4" transform="translate(843 704) rotate(-71)">75.59'</text>
                  <text dy="4" transform="translate(887 801) rotate(37)">S53°30'53"E</text><text dy="4" transform="translate(878 814) rotate(37)">100.21'</text>
                  <text dy="4" transform="translate(1022 741) rotate(-54)">S36°29'07"W</text><text dy="4" transform="translate(1035 750) rotate(-54)">168.66'</text>
                  <text dy="4" transform="translate(1179 626) rotate(-57)">N32°41'19"E</text><text dy="4" transform="translate(1193 633) rotate(-57)">194.81'</text>
                  <text dy="4" transform="translate(848 955) rotate(-49)">S41°14'31"W</text><text dy="4" transform="translate(861 966) rotate(-49)">169.30'</text>
                  <text x="708" y="504">25466 SqFt</text><text x="767" y="852">29123 SqFt</text><text x="963" y="688">20857 SqFt</text>
                </g>
                <g class="t mid small">
                  <text dy="3" transform="translate(389 749) rotate(-27)">155.19'</text><text dy="3" transform="translate(329 893) rotate(64)">119.44'</text><text dy="3" transform="translate(593 892) rotate(64)">283.50'</text>
                </g>
                <g class="t mid lot"><text x="707" y="490">LOT 15</text><text x="767" y="838">LOT 1</text><text x="963" y="673">LOT 2</text><text x="473" y="1003">LOT 16</text></g>
              </g>
            </svg>
          </div>
          <div class="side"><div class="sidebar">
            <button class="key">P</button><button class="key">S</button><button class="key">T</button><button class="key">A</button>
            <button class="glyph" aria-label="None"><svg viewBox="0 0 16 16"><circle cx="8" cy="8" r="6.500" fill="#fff4a0" stroke="#f6cf1c" stroke-width="3"/><circle cx="8" cy="8" r="6.500" fill="none" stroke="#e02020" stroke-width="1.500"/><path stroke="#e02020" stroke-width="1.500" d="M3.500 3.500l9 9"/></svg></button>
            <button class="glyph rr"><span>R</span><sub>R</sub></button></div>
            <i class="cap"></i></div>
        </div>
      </article>

      <article class="win traverse">
        <header class="wtitle"><svg><use href="#i-travv"/></svg><h2>Traverse View - LOT 1 (Grid Bearing, Grid Dist, Feet)</h2>
          <button aria-label="Minimize"><svg><use href="#i-min"/></svg></button><button aria-label="Maximize"><svg><use href="#i-max"/></svg></button><button class="kill" aria-label="Close"><svg><use href="#i-x"/></svg></button></header>
        <div class="bars">
          <nav class="wmenu"><i class="grip"></i><button>Edit</button><button>View</button><button>Tools</button><button>COGO</button></nav>
          <div class="strip"><i class="grip"></i>
            <button class="ib" aria-label="Plot"><svg><use href="#i-box"/></svg></button>
            <button class="ib" aria-label="Closure"><svg><use href="#i-close"/></svg></button>
            <button class="ib" aria-label="Area"><svg><use href="#i-poly"/></svg></button>
            <button class="ib" aria-label="Add"><svg><use href="#i-plus"/></svg></button>
            <button class="ib d" aria-label="Refresh"><svg><use href="#i-refresh"/></svg></button>
            <button class="ib" aria-label="Rows"><svg><use href="#i-rows"/></svg></button>
            <button class="ib" aria-label="Find"><svg><use href="#i-bino"/></svg></button>
            <button class="ib" aria-label="Delete"><svg><use href="#i-del"/></svg></button>
            <button class="ib d" aria-label="Insert"><svg><use href="#i-ins"/></svg></button>
            <button class="ib d" aria-label="Lock"><svg><use href="#i-lock"/></svg></button>
            <button class="ib d" aria-label="Redo"><svg><use href="#i-redo"/></svg></button>
            <button class="ib d" aria-label="Go to"><svg><use href="#i-go"/></svg></button>
            <button class="ib d" aria-label="Print"><svg><use href="#i-print"/></svg></button>
            <button class="ib d" aria-label="Inverse"><svg><use href="#i-inv"/></svg></button>
            <i class="more"></i></div>
        </div>
        <div class="gridbox">
          <table class="pts">
            <colgroup><col class="c42"><col class="c40"><col class="c88"><col class="c64"><col class="c52"><col class="c75"><col class="c65"><col class="c65"><col class="c120"><col></colgroup>
            <thead><tr><th class="c">Point</th><th class="c">Type</th><th>Grid Bearing</th><th>Grid Dist</th><th>Radius</th><th>Arc Length</th><th>Northing</th><th>Easting</th><th class="l">Description</th><th></th></tr></thead>
            <tbody>
              <tr class="sel"><td class="p">739</td><td></td><td></td><td></td><td></td><td></td><td>3394.372</td><td>4179.616</td><td></td><td></td></tr>
              <tr><td class="p">740</td><td></td><td class="a">N26°14'40"W</td><td class="a">245.07</td><td></td><td></td><td>3614.179</td><td>4071.246</td><td></td><td></td></tr>
              <tr><td class="p">741</td><td></td><td class="a">N63°28'09"E</td><td class="a">26.52</td><td></td><td></td><td>3626.024</td><td>4094.971</td><td></td><td></td></tr>
              <tr><td class="p">742</td><td>PC</td><td class="a">N63°28'09"E</td><td class="a">92.01</td><td></td><td></td><td>3667.122</td><td>4177.290</td><td></td><td></td></tr>
              <tr><td class="p">743</td><td>PT</td><td class="a">S76°00'00"E</td><td class="a">60.50</td><td class="a">-40.00</td><td class="a">68.61</td><td>3652.485</td><td>4235.997</td><td></td><td></td></tr>
              <tr><td class="p">186</td><td></td><td class="a">S19°35'18"W</td><td class="a">75.59</td><td></td><td></td><td>3581.265</td><td>4210.653</td><td></td><td></td></tr>
              <tr><td class="p">187</td><td></td><td class="a">S53°30'53"E</td><td class="a">100.21</td><td></td><td></td><td>3521.676</td><td>4291.227</td><td></td><td></td></tr>
              <tr><td class="p">739</td><td></td><td class="a">S41°14'31"W</td><td class="a">169.30</td><td></td><td></td><td>3394.372</td><td>4179.616</td><td></td><td></td></tr>
              <tr><td></td><td></td><td></td><td></td><td></td><td></td><td></td><td></td><td></td><td></td></tr>
              <tr><td></td><td></td><td></td><td></td><td></td><td></td><td></td><td></td><td></td><td></td></tr>
            </tbody>
          </table>
        </div>
        <footer class="wstatus"><span>FS=739</span><svg viewBox="0 0 10 10"><path fill="#b8b8b8" d="M7 0h2v2H7zM4 4h2v2H4zM7 4h2v2H7zM0 8h2v2H0zM4 8h2v2H4zM7 8h2v2H7z"/></svg></footer>
      </article>
    </section>

    <aside class="panel">
      <header class="ptitle"><h2>Traverses</h2>
        <button aria-label="Menu"><svg viewBox="0 0 10 10"><path fill="#fff" d="M0 3h10L5 8z"/></svg></button>
        <button aria-label="Pin"><svg viewBox="0 0 10 10"><path fill="none" stroke="#fff" d="M2.500 6V.500h4V6M7.500 0v6M0 6.500h10M5 7v3"/></svg></button>
        <button aria-label="Close"><svg viewBox="0 0 10 10"><path fill="none" stroke="#fff" stroke-width="1.500" d="M1 1l8 8M9 1L1 9"/></svg></button></header>
      <div class="strip pbar">
        <button class="pm">Tools</button><button class="pm">COGO</button><i class="sep"></i>
        <button class="ib d" aria-label="Traverse view"><svg><use href="#i-travv"/></svg></button>
        <button class="ib d" aria-label="Refresh"><svg><use href="#i-refresh"/></svg></button>
        <button class="ib" aria-label="Find"><svg><use href="#i-bino"/></svg></button>
        <button class="ib d" aria-label="List"><svg><use href="#i-list"/></svg></button>
        <button class="ib d" aria-label="Insert"><svg><use href="#i-ins"/></svg></button>
        <button class="ib" aria-label="Delete"><svg><use href="#i-del"/></svg></button><i class="sep"></i>
        <button class="ib d" aria-label="Redo"><svg><use href="#i-redo"/></svg></button><i class="sep"></i>
        <button class="ib d on" aria-label="Groups"><svg><use href="#i-ylist"/></svg></button>
        <i class="more"></i></div>
      <div class="plist">
        <table class="names">
          <colgroup><col class="n1"><col class="n1"><col class="n3"><col class="n4"><col></colgroup>
          <thead><tr><th>Name</th><th>Description</th><th>P...</th><th>Layer</th><th></th></tr></thead>
          <tbody>
            <tr class="g shut"><td colspan="5"><div><span>Un-Assigned [45]</span></div></td></tr>
            <tr class="g"><td colspan="5"><div><span>Boundaries [3]</span></div></td></tr>
            <tr><td><label><input type="checkbox">BOUNDARY PER ...</label></td><td></td><td>16</td><td></td></tr>
            <tr><td><label><input type="checkbox" checked>TRUE BOUNDAR...</label></td><td></td><td>20</td><td></td></tr>
            <tr><td><label><input type="checkbox" checked>CSF 23770 (ROTA...</label></td><td></td><td>20</td><td></td></tr>
            <tr class="g gap shut"><td colspan="5"><div><span>Control [8]</span></div></td></tr>
            <tr class="g"><td colspan="5"><div><span>Lots [19]</span></div></td></tr>
            <tr><td><label><input type="checkbox" checked>LOT 16</label></td><td></td><td>8</td><td></td></tr>
            <tr><td><label><input type="checkbox" checked>WOODLAND LAK...</label></td><td></td><td>8</td><td></td></tr>
            <tr><td><label><input type="checkbox">.7 ACRE LOT</label></td><td></td><td>5</td><td></td></tr>
            <tr class="sel"><td><label><input type="checkbox" checked><span>LOT 1</span></label></td><td></td><td>8</td><td></td></tr>
            <tr><td><label><input type="checkbox" checked>LOT 2</label></td><td></td><td>7</td><td></td></tr>
            <tr><td><label><input type="checkbox" checked>LOT 3</label></td><td></td><td>5</td><td></td></tr>
            <tr><td><label><input type="checkbox" checked>LOT 4</label></td><td></td><td>7</td><td></td></tr>
            <tr><td><label><input type="checkbox" checked>LOT 5</label></td><td></td><td>7</td><td></td></tr>
            <tr><td><label><input type="checkbox" checked>LOT 6</label></td><td></td><td>7</td><td></td></tr>
            <tr><td><label><input type="checkbox" checked>LOT 7</label></td><td></td><td>7</td><td></td></tr>
            <tr><td><label><input type="checkbox">LOT 21 - WOODL...</label></td><td></td><td>5</td><td></td></tr>
            <tr><td><label><input type="checkbox" checked>LOT 8</label></td><td></td><td>6</td><td></td></tr>
            <tr><td><label><input type="checkbox" checked>LOT 9</label></td><td></td><td>10</td><td></td></tr>
            <tr><td><label><input type="checkbox" checked>LOT 10</label></td><td></td><td>5</td><td></td></tr>
            <tr><td><label><input type="checkbox" checked>LOT 11</label></td><td></td><td>11</td><td></td></tr>
            <tr><td><label><input type="checkbox" checked>LOT 12</label></td><td></td><td>10</td><td></td></tr>
            <tr><td><label><input type="checkbox" checked>LOT 13</label></td><td></td><td>5</td><td></td></tr>
            <tr><td><label><input type="checkbox" checked>LOT 14</label></td><td></td><td>5</td><td></td></tr>
            <tr><td><label><input type="checkbox" checked>LOT 15</label></td><td></td><td>8</td><td></td></tr>
            <tr class="g gap"><td colspan="5"><div><span>Building Envelopes [14]</span></div></td></tr>
            <tr><td><label><input type="checkbox" checked>LOT 1 - BUILDING ...</label></td><td></td><td>8</td><td></td></tr>
            <tr><td><label><input type="checkbox" checked>LOT 2 - BUILDING ...</label></td><td></td><td>7</td><td></td></tr>
            <tr><td><label><input type="checkbox" checked>LOT 3 - BUILDING ...</label></td><td></td><td>5</td><td></td></tr>
            <tr><td><label><input type="checkbox" checked>LOT 4 - BUILDING ...</label></td><td></td><td>5</td><td></td></tr>
            <tr><td><label><input type="checkbox" checked>LOT 5 - BUILDING ...</label></td><td></td><td>5</td><td></td></tr>
            <tr><td><label><input type="checkbox" checked>LOT 6 - BUILDING ...</label></td><td></td><td>7</td><td></td></tr>
            <tr><td><label><input type="checkbox" checked>LOT 7 - BUILDING ...</label></td><td></td><td>7</td><td></td></tr>
            <tr><td><label><input type="checkbox" checked>BUILDING ENVEL...</label></td><td></td><td>6</td><td></td></tr>
            <tr><td><label><input type="checkbox" checked>BUILDING ENVEL...</label></td><td></td><td>7</td><td></td></tr>
            <tr><td><label><input type="checkbox" checked>BUILDING ENVEL...</label></td><td></td><td>5</td><td></td></tr>
            <tr><td><label><input type="checkbox" checked>BUILDING ENVEL...</label></td><td></td><td>6</td><td></td></tr>
            <tr><td><label><input type="checkbox" checked>BUILDING ENVEL...</label></td><td></td><td>8</td><td></td></tr>
            <tr><td><label><input type="checkbox" checked>BUILDING ENVEL...</label></td><td></td><td>5</td><td></td></tr>
            <tr><td><label><input type="checkbox" checked>BUILDING ENVEL...</label></td><td></td><td>5</td><td></td></tr>
          </tbody>
        </table>
        <div class="scroll"><button aria-label="Scroll up"><svg viewBox="0 0 10 10"><path d="M1 7l4-4 4 4"/></svg></button><div class="track"><i></i></div><button aria-label="Scroll down"><svg viewBox="0 0 10 10"><path d="M1 3l4 4 4-4"/></svg></button></div>
      </div>
    </aside>
    <nav class="tabs">
      <button class="h80"><svg><use href="#i-tasks"/></svg>Tasks</button>
      <button class="h82"><svg><use href="#i-points"/></svg>Points</button>
      <button class="h100"><svg><use href="#i-draws"/></svg>Drawings</button>
      <button class="h96"><svg><use href="#i-surf"/></svg>Surfaces</button>
      <button class="h122"><svg><use href="#i-data"/></svg>Drawing Data</button>
    </nav>
  </main>
  <footer class="status"><span>Survey: X=4523.31 Y=3757.82 Zoom=0.9X&nbsp; Current Layer: 0</span><span class="hint">Survey - Press the Ctrl key to drag survey</span><span class="k">OVR</span><span class="k">CAP</span><span class="k">NUM</span></footer>
</div>
</body>
</html>
```
FILE: styles.css
```css
* { box-sizing: border-box; }
html, body { margin: 0; height: 100%; }
body { font: 12px/16px Roboto, "Open Sans", sans-serif; color: #111; }
button { margin: 0; padding: 0; border: 0; background: none; font: inherit; color: inherit; white-space: nowrap; }
select { appearance: none; border: 0; background: none; font: inherit; color: inherit; padding: 0; min-width: 0; flex: 1; }
h1, h2 { margin: 0; font: inherit; white-space: nowrap; }
i { font-style: normal; }
svg { display: block; flex: none; width: 16px; height: 16px; }
.defs { position: absolute; width: 0; height: 0; }

.app { display: flex; flex-direction: column; height: 100vh; overflow: hidden; background: linear-gradient(90deg, #d9d9d9, #e6e6e6); }
.titlebar { display: flex; align-items: center; gap: 2px; height: 23px; flex: none; padding-left: 3px; background: #0078d7; color: #fff; }
.logo { width: 18px; height: 18px; }
.titlebar h1 { flex: 1; }
.sys { display: flex; gap: 33px; padding-right: 19px; }
.sys svg { width: 12px; height: 12px; fill: none; stroke: #fff; }
.menubar { display: flex; align-items: center; gap: 15px; height: 24px; flex: none; padding-left: 4px; }
.grip { flex: none; width: 2px; height: 12px; background: repeating-linear-gradient(#a0a0a0 0 2px, transparent 2px 4px); }
.menubar .grip { margin-right: -4px; }

.ribbon { display: flex; height: 53px; flex: none; }
.rgroup { display: flex; padding-left: 4px; background: linear-gradient(#fff 35%, #b6b6b6); border-radius: 0 4px 4px 0; border-bottom: 1px solid #9a9a9a; }
.rgroup > .grip { height: 40px; margin: 6px 4px 0 0; }
.rgroup + .rgroup > .grip { margin-right: 5px; }
.rgroup button { display: flex; flex-direction: column; align-items: center; justify-content: flex-start; height: 49px; margin-top: 2px; padding-top: 3px; text-align: center; line-height: 13px; }
.rgroup button svg { margin-bottom: 4px; }
.on { background: #cce4f7; box-shadow: inset 0 0 0 1px #0078d7; }
.w39 { width: 39px; } .w44 { width: 44px; } .w49 { width: 49px; } .w51 { width: 51px; } .w55 { width: 55px; } .w58 { width: 58px; } .w60 { width: 60px; } .w65 { width: 65px; }
.sep { flex: none; width: 1px; margin: 4px 7px 4px 0; background: #c0c0c0; }
.more { flex: none; width: 11px; margin-left: auto; border-radius: 0 4px 4px 0; background: linear-gradient(#f0f0f0, #9c9c9c); display: flex; flex-direction: column; align-items: center; justify-content: flex-end; padding-bottom: 3px; }
.more::before { content: ""; width: 6px; height: 1px; background: #111; margin-bottom: 1px; box-shadow: 1px 1px #fff; }
.more::after { content: ""; border: 3px solid transparent; border-top-color: #111; border-bottom: 0; }

.work { flex: 1; min-height: 0; display: flex; }
.mdi { position: relative; flex: 1; min-width: 0; overflow: hidden; background: #ababab; border-top: 2px solid #6a6a6a; border-left: 1px solid #8a8a8a; }

.win { position: absolute; display: flex; flex-direction: column; border: 1px solid #4c5158; border-radius: 7px 7px 0 0; padding: 0 7px 8px; }
.drawing { left: 1px; top: 0; width: 1366px; height: 910px; background: linear-gradient(#bfccda, #d7e4f2 30px); box-shadow: inset 1px 1px #eef4fa; }
.traverse { left: 795px; top: 67px; width: 655px; height: 418px; border-color: #111; background: linear-gradient(#99b4d1, #b9d1ea 30px); box-shadow: inset 1px 1px #e0ecf8, inset -1px -1px #35cfe0; }
.wtitle { display: flex; align-items: center; height: 30px; flex: none; padding: 4px 2px 0; gap: 2px; }
.drawing .wtitle { color: #8b939d; }
.wtitle h2 { flex: 1; margin-left: 2px; }
.wtitle button { width: 32px; height: 18px; display: flex; align-items: center; justify-content: center; margin-top: -4px; border: 1px solid #8491a5; border-radius: 2px; background: linear-gradient(#d8e3ef, #c2d0e0); box-shadow: inset 0 0 0 1px #e4edf6; }
.traverse .wtitle button { background: linear-gradient(#c4d6ea 45%, #a5bdd8 50%); }
.wtitle button svg { width: 14px; height: 10px; }
.traverse .wtitle .kill { background: linear-gradient(#dc8f80 45%, #b8392a 50%); border-color: #6a2a24; box-shadow: inset 0 0 0 1px #e0a090; }
.bars { display: flex; height: 26px; flex: none; background: linear-gradient(90deg, #d9d9d9, #e2e2e2); }
.wmenu { display: flex; align-items: center; gap: 15px; padding: 0 11px 0 4px; }
.wmenu .grip { margin-right: -3px; }
.strip { display: flex; align-items: center; background: linear-gradient(#fff 30%, #bcbcbc); border-radius: 4px; padding-left: 4px; }
.strip > .grip { margin-right: 5px; }
.strip .more { align-self: stretch; }
.ib { width: 22px; height: 22px; display: flex; align-items: center; justify-content: center; }
.ib.d { width: 26px; padding: 0 8px 0 2px; position: relative; }
.ib.d::after { content: ""; position: absolute; right: 2px; bottom: 2px; width: 0; height: 0; border: solid transparent; border-width: 0 0 5px 5px; border-bottom-color: #666; }
.combo { display: flex; align-items: center; height: 19px; background: #fff; padding-left: 4px; }
.arr { width: 12px; height: 19px; flex: none; background: linear-gradient(#f0f0f0, #c4c4c4); display: flex; align-items: center; justify-content: center; }
.arr::after { content: ""; border: 3px solid transparent; border-top-color: #111; border-bottom: 0; }
.scale { width: 93px; margin: 0 4px 0 2px; }
.format { gap: 7px; width: 557px; }
.format > .grip { margin-right: 0; }
.font { width: 155px; font: 15px/18px "Liberation Sans", Arial, sans-serif; gap: 7px; }
.font svg { width: 13px; height: 14px; }
.size { width: 43px; } .weight { width: 63px; padding-left: 2px; } .pen { width: 83px; } .thick { width: 69px; }
.swatch { width: 10px; height: 13px; margin-right: 3px; background: #f00; }
.stroke { width: 18px; height: 5px; border-radius: 3px; background: #000; }
.sheet { flex: 1; min-height: 0; display: flex; border-top: 2px solid #808080; border-bottom: 1px solid #fff; }
.canvas { flex: 1; min-width: 0; overflow: hidden; background: #fff; border: solid #808080; border-width: 0 8px; }
.map { width: 1306px; height: 815px; }
.side { width: 28px; flex: none; border-left: 2px solid #fff; background: #d9d9d9; text-align: center; }
.sidebar { display: flex; flex-direction: column; align-items: center; gap: 8px; height: 539px; justify-content: flex-end; padding: 0 2px 0 0; background: linear-gradient(90deg, #fff 40%, #c8c8c8); border-radius: 4px; }
.key { width: 14px; height: 14px; border-radius: 2px; background: #f6cf1c; font: bold 14px/14px "Liberation Sans", Arial, sans-serif; }
.glyph { height: 14px; display: flex; align-items: center; }
.rr { height: 18px; font: 12px/12px "Liberation Sans", Arial, sans-serif; align-items: flex-start; }
.rr sub { align-self: flex-end; font-size: 12px; }
.cap { display: flex; align-items: center; justify-content: flex-end; gap: 1px; height: 12px; border-radius: 0 0 4px 4px; padding-right: 4px; background: linear-gradient(90deg, #999, #eee); }
.cap::before { content: ""; width: 1px; height: 5px; background: #111; }
.cap::after { content: ""; border: 3px solid transparent; border-left-color: #111; border-right: 0; }

.ln { fill: none; stroke: #111; }
.dash { stroke-dasharray: 7 4; }
.long { stroke-dasharray: 14 9; }
.dot { stroke-dasharray: 2 2; }
.river { fill: none; stroke: #0000f0; stroke-width: 2; }
.river .cyan { stroke: #00f6ff; }
.t { font: 11px "Liberation Sans", Arial, sans-serif; fill: #111; }
.mid { text-anchor: middle; } .end { text-anchor: end; }
.small { font-size: 9px; } .lot { font-size: 13px; }

.gridbox { flex: 1; min-height: 0; margin-top: 1px; overflow: hidden; background: #fff; border: 1px solid #7f8793; }
table { border-collapse: collapse; table-layout: fixed; font: 13px/15px "Liberation Sans", Arial, sans-serif; }
th { font-weight: 400; padding: 0; white-space: nowrap; }
td { padding: 0; white-space: nowrap; }
.pts { width: 100%; }
.pts th { height: 24px; padding-right: 6px; text-align: right; border-right: 1px solid #e2e2e2; }
.pts th.c { padding: 0; text-align: center; } .pts th.l { text-align: left; padding-left: 6px; }
.pts td { height: 33px; vertical-align: bottom; border: solid #ececec; border-width: 0 1px 1px 0; padding-left: 2px; }
.pts td.a { vertical-align: top; }
.pts td.p { padding-left: 8px; }
.pts tr > :last-child { border-right: 0; }
.sel td { background: #0078d7; color: #fff; }
.pts .sel td.p { color: #111; background: linear-gradient(90deg, #fff 6px, #555 6px 7px, #f0f0f0 7px); }
.pts .sel td:last-child { background: #fff; }
.c40 { width: 40px; } .c42 { width: 42px; } .c52 { width: 52px; } .c64 { width: 64px; } .c65 { width: 65px; } .c75 { width: 75px; } .c88 { width: 88px; } .c120 { width: 120px; }
.wstatus { display: flex; align-items: center; justify-content: space-between; height: 19px; flex: none; padding: 3px 2px 0 4px; background: #f0f0f0; }
.wstatus svg { width: 10px; height: 10px; }

.panel { display: flex; flex-direction: column; width: 398px; flex: none; border-left: 6px solid #e2e2e2; }
.ptitle { display: flex; align-items: center; gap: 7px; height: 19px; flex: none; padding: 0 5px 0 4px; color: #fff; background: linear-gradient(#0a98fc, #0078d7); }
.ptitle h2 { flex: 1; }
.ptitle svg { width: 10px; height: 10px; }
.pbar { height: 25px; flex: none; border-radius: 0; padding-left: 9px; }
.pm { display: flex; align-items: center; gap: 8px; margin-right: 8px; }
.pm::after { content: ""; border: 3px solid transparent; border-top-color: #111; border-bottom: 0; }
.pbar .sep { align-self: stretch; margin: 4px 5px 4px 3px; }
.plist { flex: 1; min-height: 0; display: flex; overflow: hidden; background: #fff; border: 1px solid #8e8e8e; border-top: 0; }
.names { width: 374px; align-self: flex-start; flex: 1; }
.n1 { width: 146px; } .n3 { width: 31px; } .n4 { width: 47px; }
.names th { height: 24px; text-align: left; padding-left: 5px; border-right: 1px solid #e0e0e0; }
.names th:last-child { border-right: 0; }
.names td { height: 21px; }
.names td:nth-child(3) { padding-left: 6px; }
.names label { display: flex; align-items: center; gap: 5px; padding-left: 4px; }
.names .sel label span { flex: 1; height: 19px; margin-left: -3px; padding-left: 3px; line-height: 19px; background: #f0f0f0; outline: 1px dotted #333; color: #111; }
.names .sel td:first-child { background: #fff; }
.names .gap td { height: 24px; padding-top: 3px; }
.g div { display: flex; align-items: center; gap: 7px; padding: 0 26px 0 10px; height: 21px; font: 12px/16px Roboto, "Open Sans", sans-serif; color: #0a3a94; position: relative; }
.g div::before, .g div::after { content: ""; flex: 1; height: 1px; background: #a9bfdc; }
.g span::after { content: ""; position: absolute; right: 11px; top: 9px; width: 5px; height: 5px; border: solid #0a3a94; border-width: 2px 0 0 2px; transform: rotate(45deg); }
.g.shut span::after { top: 6px; transform: rotate(225deg); }
input[type=checkbox] { appearance: none; flex: none; width: 13px; height: 13px; margin: 0; border: 1px solid #222; background: #fff; display: flex; align-items: center; justify-content: center; }
input:checked::after { content: ""; width: 8px; height: 4px; margin-top: -2px; border: solid #333; border-width: 0 0 1px 1px; transform: rotate(-45deg); }
.scroll { width: 16px; flex: none; display: flex; flex-direction: column; background: #f0f0f0; }
.scroll button { height: 17px; display: flex; align-items: center; justify-content: center; }
.scroll svg { width: 10px; height: 10px; fill: none; stroke: #555; stroke-width: 2; }
.track { flex: 1; }
.track i { display: block; height: 88%; background: #cdcdcd; }
.tabs { width: 23px; flex: none; display: flex; flex-direction: column; gap: 14px; padding: 4px 0 0 2px; background: #d9d9d9; }
.tabs button { display: flex; align-items: center; gap: 8px; writing-mode: vertical-rl; padding-top: 4px; border: 1px solid #9c9c9c; border-right: 0; border-radius: 4px 0 0 4px; color: #6a6a6a; }
.h80 { height: 80px; } .h82 { height: 82px; } .h96 { height: 96px; } .h100 { height: 100px; } .h122 { height: 122px; }
.status { display: flex; align-items: center; height: 20px; flex: none; padding: 3px 22px 0 4px; background: #f0f0f0; white-space: nowrap; border-top: 1px solid #dcdcdc; }
.hint { margin-left: auto; flex: 0 0 482px; }
.status .k { width: 29px; padding-left: 4px; border-left: 1px solid #d0d0d0; color: #888; }
```
